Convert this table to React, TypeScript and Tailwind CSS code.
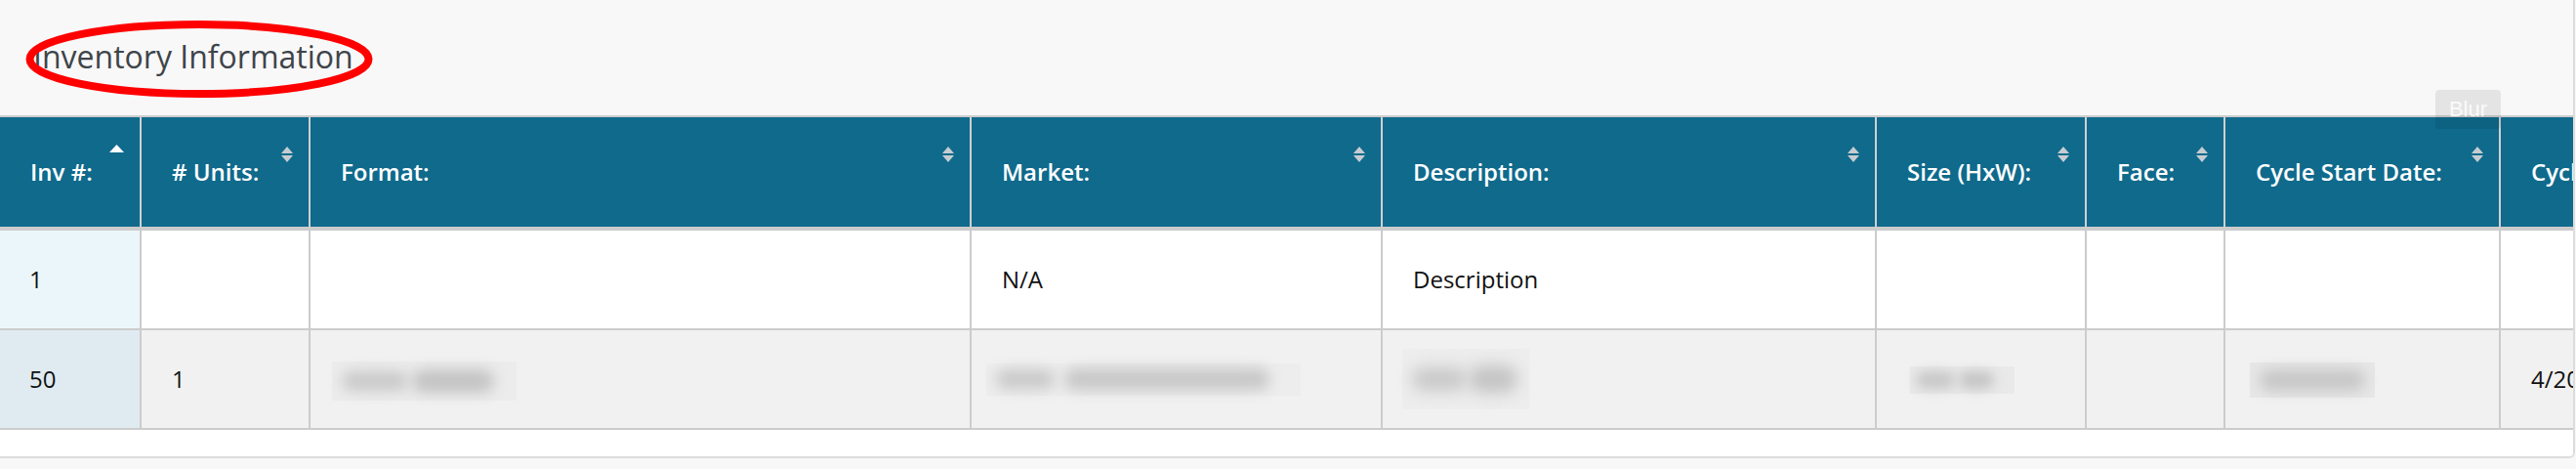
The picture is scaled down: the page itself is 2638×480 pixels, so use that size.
import React from "react";

type Col = { label: string; sort: "asc" | "both" | "none" };

const columns: Col[] = [
  { label: "Inv #:", sort: "asc" },
  { label: "# Units:", sort: "both" },
  { label: "Format:", sort: "both" },
  { label: "Market:", sort: "both" },
  { label: "Description:", sort: "both" },
  { label: "Size (HxW):", sort: "both" },
  { label: "Face:", sort: "both" },
  { label: "Cycle Start Date:", sort: "both" },
  { label: "Cycle End Date:", sort: "none" },
];

const gridCols =
  "grid grid-cols-[145px_173px_677px_421px_506px_215px_142px_282px_200px]";

function SortIcon({ sort }: { sort: Col["sort"] }) {
  if (sort === "none") return null;
  if (sort === "asc") {
    return (
      <svg className="absolute top-[28px] right-[16px]" width="15" height="8" viewBox="0 0 15 8">
        <path d="M0 8 L7.5 0 L15 8 Z" fill="#ffffff" />
      </svg>
    );
  }
  return (
    <svg className="absolute top-[30px] right-[16px]" width="12" height="16" viewBox="0 0 12 16">
      <path d="M0 7 L6 0 L12 7 Z" fill="#c6ccd0" />
      <path d="M0 9 L12 9 L6 16 Z" fill="#c6ccd0" />
    </svg>
  );
}

// blurred-out values, as in the redacted screenshot
function Smudge({ box, blobs }: { box: string; blobs: string[] }) {
  return (
    <div className={box}>
      {blobs.map((b, i) => (
        <span key={i} className={b} />
      ))}
    </div>
  );
}

const cell = "flex items-center border-r-2 border-[#cccccc] overflow-hidden whitespace-nowrap";

export default function App() {
  return (
    <div className="relative w-[2638px] h-[480px] bg-[#f8f8f8] overflow-hidden font-['Open_Sans',sans-serif]">
      <div className="w-[2637px] h-[469px] flex flex-col bg-white border-r-2 border-b-2 border-[#dcdcdc] rounded-br-[6px] overflow-hidden">
        {/* title */}
        <div className="relative h-[118px] shrink-0 bg-[#f8f8f8]">
          <h2 className="pt-[42px] pl-[34px] text-[32px] leading-none font-normal text-[#3e444a]">
            Inventory Information
          </h2>
          <svg className="absolute left-0 top-0 pointer-events-none" width="400" height="118" viewBox="0 0 400 118">
            <ellipse cx="204" cy="60.5" rx="173.5" ry="35.5" fill="none" stroke="#ff0000" strokeWidth="8" />
          </svg>
        </div>

        {/* header */}
        <div className={`${gridCols} h-[118px] shrink-0 bg-[#0f6a8c] border-t-2 border-b-4 border-[#cccccc]`}>
          {columns.map((c) => (
            <div key={c.label} className={`relative ${cell} border-[#d0d0d0] pl-[31px] text-[24px] font-semibold text-white`}>
              {c.label}
              <SortIcon sort={c.sort} />
            </div>
          ))}
        </div>

        {/* row 1 */}
        <div className={`${gridCols} h-[102px] shrink-0 bg-white border-b-2 border-[#cccccc] text-[24px] text-[#111111]`}>
          <div className={`${cell} bg-[#ebf6fa] pl-[30px]`}>1</div>
          <div className={cell} />
          <div className={cell} />
          <div className={`${cell} pl-[31px]`}>N/A</div>
          <div className={`${cell} pl-[31px]`}>Description</div>
          <div className={cell} />
          <div className={cell} />
          <div className={cell} />
          <div className={cell} />
        </div>

        {/* row 2 */}
        <div className={`${gridCols} h-[102px] shrink-0 bg-[#f1f1f1] border-b-2 border-[#cccccc] text-[24px] text-[#111111]`}>
          <div className={`${cell} bg-[#dfebf0] pl-[30px]`}>50</div>
          <div className={`${cell} pl-[31px]`}>1</div>
          <div className={`${cell} pt-[4px]`}>
            <Smudge
              box="ml-[22px] w-[189px] h-[40px] bg-[#ececec] flex items-center gap-[4px] px-[10px]"
              blobs={[
                "h-[20px] w-[68px] rounded-full bg-[#c9c9c9] blur-[7px]",
                "h-[24px] w-[84px] rounded-full bg-[#c4c4c4] blur-[7px]",
              ]}
            />
          </div>
          <div className={cell}>
            <Smudge
              box="ml-[15px] w-[322px] h-[33px] bg-[#ededed] flex items-center gap-[10px] px-[10px]"
              blobs={[
                "h-[20px] w-[60px] rounded-full bg-[#c9c9c9] blur-[7px]",
                "h-[22px] w-[210px] rounded-full bg-[#c7c7c7] blur-[7px]",
              ]}
            />
          </div>
          <div className={cell}>
            <Smudge
              box="ml-[20px] w-[130px] h-[62px] bg-[#ededed] flex items-center gap-[2px] px-[10px]"
              blobs={[
                "h-[24px] w-[56px] rounded-full bg-[#c9c9c9] blur-[8px]",
                "h-[28px] w-[50px] rounded-full bg-[#c4c4c4] blur-[8px]",
              ]}
            />
          </div>
          <div className={`${cell} pt-[2px]`}>
            <Smudge
              box="ml-[34px] w-[107px] h-[28px] bg-[#e9e9e9] flex items-center gap-[4px] px-[6px]"
              blobs={[
                "h-[18px] w-[40px] rounded-full bg-[#c8c8c8] blur-[6px]",
                "h-[18px] w-[36px] rounded-full bg-[#c5c5c5] blur-[6px]",
              ]}
            />
          </div>
          <div className={cell} />
          <div className={`${cell} pt-[2px]`}>
            <Smudge
              box="ml-[25px] w-[128px] h-[36px] bg-[#e7e7e7] flex items-center px-[10px]"
              blobs={["h-[22px] w-[108px] rounded-full bg-[#c7c7c7] blur-[7px]"]}
            />
          </div>
          <div className={`${cell} pl-[31px]`}>4/20/2024</div>
        </div>

        <div className="flex-1 bg-white" />
      </div>

      {/* floating Blur toggle */}
      <button className="absolute left-[2494px] top-[92px] w-[67px] h-[40px] rounded-[4px] bg-black/[0.08] text-[22px] leading-none text-white/80 font-['Liberation_Sans',sans-serif]">
        Blur
      </button>
    </div>
  );
}
